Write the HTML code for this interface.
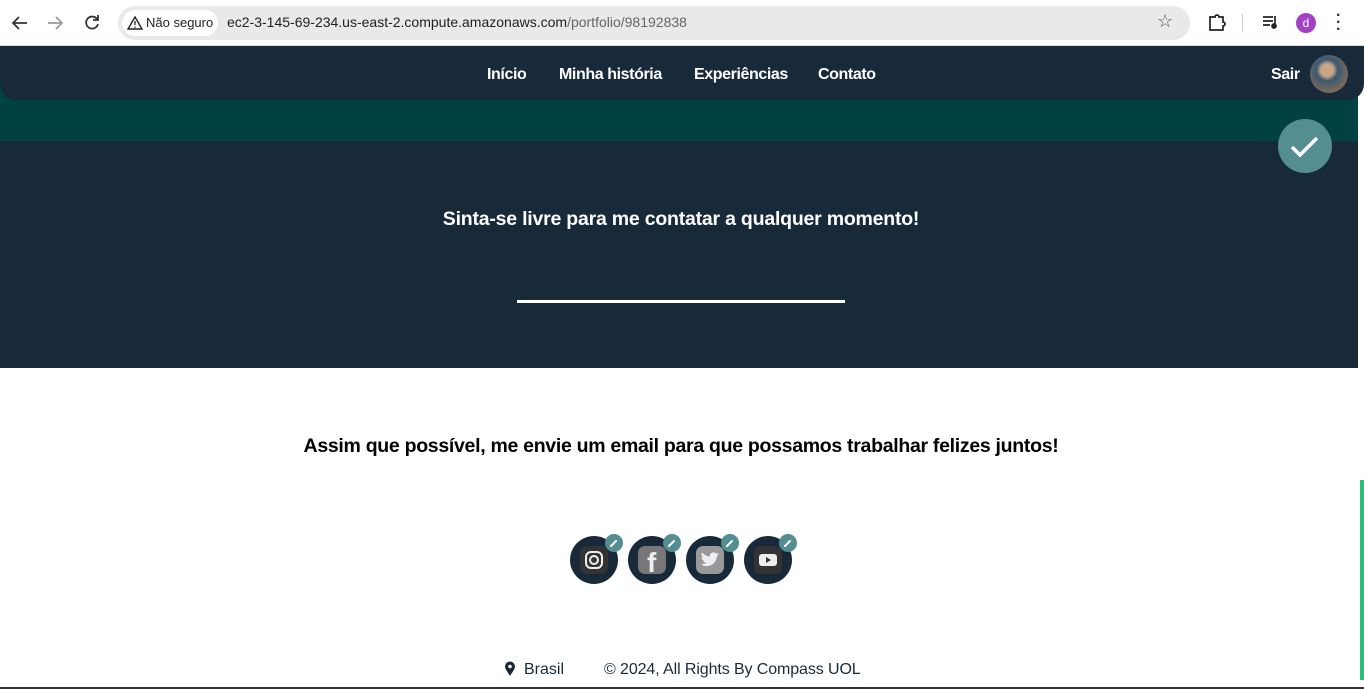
<!DOCTYPE html>
<html><head><meta charset="utf-8"><style>
*{margin:0;padding:0;box-sizing:border-box}
body{width:1364px;height:689px;overflow:hidden;background:#fff;font-family:"Liberation Sans",Arial,sans-serif;position:relative}
.chrome{position:absolute;left:0;top:0;width:1364px;height:46px;background:#fff;border-bottom:1px solid #ddd}
.url{position:absolute;left:118px;top:6px;width:1072px;height:34px;border-radius:17px;background:#e9e9e9}
.ns{position:absolute;left:122px;top:10px;height:26px;width:96px;border-radius:13px;background:#fff;font-size:13px;line-height:26px;padding-left:24px;color:#222}
.teal{position:absolute;left:0;top:46px;width:1358px;height:95px;background:#004143}
.nav{position:absolute;left:0;top:46px;width:1364px;height:54px;background:#182a3a;border-radius:0 0 16px 16px}
.nav a{position:absolute;top:20px;color:#fff;font-weight:bold;font-size:16px;text-decoration:none;letter-spacing:-0.4px}
.dark{position:absolute;left:0;top:141px;width:1358px;height:227px;background:#182a3a}
.h1{position:absolute;top:208px;left:0;width:1362px;text-align:center;color:#fff;font-weight:bold;font-size:19.5px;letter-spacing:-0.22px}
.line{position:absolute;left:517px;top:300px;width:328px;height:3px;background:#fff}
.check{position:absolute;left:1278px;top:119px;width:54px;height:54px;border-radius:50%;background:#548d92}
.h2{position:absolute;top:435px;left:0;width:1362px;text-align:center;color:#000;font-weight:bold;font-size:19.5px;letter-spacing:-0.3px}
.soc{position:absolute;top:536px;width:48px;height:48px;border-radius:50%;background:#182a3a}
.soc .in{position:absolute;left:10px;top:10px;width:28px;height:28px;border-radius:7px}
.pen{position:absolute;top:534px;width:18px;height:18px;border-radius:50%;background:#548d92}
.foot{position:absolute;top:661px;font-size:16px;color:#182a3a}
</style></head><body>
<div class="chrome">
<svg width="110" height="46" style="position:absolute;left:0;top:0" fill="none" stroke="#333" stroke-width="1.8"><path d="M27 23H13M19 17l-6 6 6 6"/><path d="M48 23h14M56 17l6 6-6 6" stroke="#999"/><path d="M97 19a6 6 0 1 0 1 5M98 15v5h-5"/></svg>
<div class="url"></div>
<div class="ns"><svg width="16" height="14" style="position:absolute;left:5px;top:6px"><path d="M8 1L15 13H1Z" fill="none" stroke="#222" stroke-width="1.4"/><path d="M8 5v4M8 10.5v1.2" stroke="#222" stroke-width="1.3"/></svg>Não seguro</div>
<div style="position:absolute;left:227px;top:14px;font-size:14px;color:#222">ec2-3-145-69-234.us-east-2.compute.amazonaws.com<span style="color:#666">/portfolio/98192838</span></div>
<div style="position:absolute;left:1157px;top:11px;font-size:18px;color:#555">☆</div>
<div style="position:absolute;left:1242px;top:14px;width:1px;height:18px;background:#ccc"></div>
<div style="position:absolute;left:1296px;top:13px;width:20px;height:20px;border-radius:50%;background:#a142c4;color:#fff;font-size:12px;text-align:center;line-height:20px">d</div>
<div style="position:absolute;left:1336px;top:12px;font-size:16px;color:#333;line-height:7px;font-weight:bold">·<br>·<br>·</div>
<svg width="24" height="24" style="position:absolute;left:1205px;top:11px"><path d="M5 6h5a2 2 0 0 1 4 0h4v5a2 2 0 0 1 0 4v4H5z" fill="none" stroke="#222" stroke-width="1.7"/></svg>
<svg width="22" height="20" style="position:absolute;left:1261px;top:13px" stroke="#222" stroke-width="1.7"><path d="M2 4h10M2 8h10M2 12h7M14 3v10"/><circle cx="13" cy="13" r="2" fill="#222"/></svg>
</div>
<div class="teal"></div>
<div class="nav">
<a style="left:487px">Início</a><a style="left:559px">Minha história</a><a style="left:694px">Experiências</a><a style="left:818px">Contato</a><a style="left:1271px">Sair</a>
<div style="position:absolute;left:1310px;top:9px;width:38px;height:38px;border-radius:50%;background:radial-gradient(circle at 45% 40%,#c9a58a 0 20%,#3a5870 35%,#7a6a5a 70%,#a57a60)"></div>
</div>
<div class="dark"></div>
<div class="check"><svg width="54" height="54"><path d="M14 28l8 8 17-17" fill="none" stroke="#fff" stroke-width="3.5"/></svg></div>
<div class="h1">Sinta-se livre para me contatar a qualquer momento!</div>
<div class="line"></div>
<div class="h2">Assim que possível, me envie um email para que possamos trabalhar felizes juntos!</div>
<div class="soc" style="left:570px"><div class="in" style="background:#333"><svg width="28" height="28"><rect x="6" y="6" width="16" height="16" rx="5" fill="none" stroke="#eee" stroke-width="2"/><circle cx="14" cy="14" r="4" fill="none" stroke="#eee" stroke-width="2"/></svg></div></div>
<div class="soc" style="left:628px"><div class="in" style="background:#777"><span style="position:absolute;left:9px;top:1px;color:#eee;font-weight:bold;font-size:28px">f</span></div></div>
<div class="soc" style="left:686px"><div class="in" style="background:#999"><svg width="28" height="28"><path d="M6 19c6 3 14 0 15-9l2-2-2 .5 1-2-2 1a3.5 3.5 0 0 0-6 3c-3 0-6-2-8-4-1 2 0 4 1 5l-1.5-.3c0 2 1.5 3 3 3.5H7c.5 1.5 2 2 3.5 2-1.5 1-3 1.5-4.5 1.3z" fill="#eee"/></svg></div></div>
<div class="soc" style="left:744px"><div class="in" style="background:#333"><svg width="28" height="28"><rect x="5" y="8" width="18" height="12" rx="3" fill="#eee"/><path d="M12 11v6l5-3z" fill="#333"/></svg></div></div>
<div class="pen" style="left:605px"></div><div class="pen" style="left:663px"></div><div class="pen" style="left:721px"></div><div class="pen" style="left:779px"></div>
<svg width="1364" height="689" style="position:absolute;left:0;top:0;pointer-events:none" stroke="#fff" stroke-width="2" stroke-linecap="round"><path d="M611 546l5-5M669 546l5-5M727 546l5-5M785 546l5-5"/></svg>
<svg width="12" height="16" style="position:absolute;left:504px;top:661px"><path d="M6 15C2 9 1 7 1 5.5a5 5 0 0 1 10 0C11 7 10 9 6 15z" fill="#182a3a"/><circle cx="6" cy="5.5" r="1.8" fill="#fff"/></svg>
<div class="foot" style="left:524px">Brasil</div>
<div class="foot" style="left:604px;letter-spacing:-0.1px">© 2024, All Rights By Compass UOL</div>
<div style="position:absolute;left:1360px;top:480px;width:4px;height:200px;background:#2bbf7a"></div>
<div style="position:absolute;left:0;top:687px;width:1364px;height:2px;background:#333"></div>
</body></html>
